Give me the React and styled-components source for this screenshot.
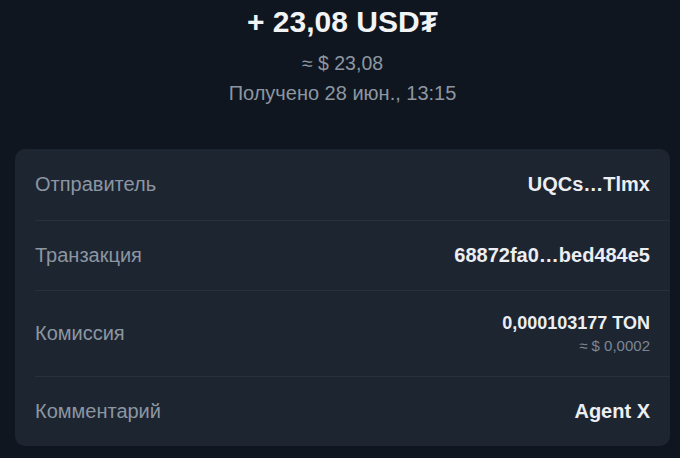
import React from "react";
import styled, { createGlobalStyle } from "styled-components";

const Global = createGlobalStyle`
  html, body { margin: 0; padding: 0; background: #10161f; }
  body { font-family: "Liberation Sans", Arial, sans-serif; }
`;

const Page = styled.div`
  width: 680px;
  height: 458px;
  background: #10161f;
  display: flex;
  flex-direction: column;
  align-items: center;
  box-sizing: border-box;
  padding: 5px 10px 0 15px;
  overflow: hidden;
`;

const Header = styled.div`
  display: flex;
  flex-direction: column;
  align-items: center;
`;

const Amount = styled.div`
  font-size: 30px;
  font-weight: 700;
  color: #f2f3f5;
  line-height: 34px;
`;

const Sub = styled.div`
  font-size: ${(p) => p.$size}px;
  color: #8c96a2;
  line-height: 24px;
  margin-top: ${(p) => p.$mt}px;
`;

const Card = styled.div`
  margin-top: 44px;
  align-self: stretch;
  background: #1d2531;
  border-radius: 10px;
  padding-left: 20px;
`;

const Row = styled.div`
  height: ${(p) => p.$h}px;
  display: flex;
  align-items: center;
  justify-content: space-between;
  padding-right: 20px;
  border-top: ${(p) => (p.$first ? "none" : "1px solid #28303c")};
  box-sizing: border-box;
`;

const Label = styled.div`
  font-size: 20px;
  color: #8c96a2;
`;

const Value = styled.div`
  font-size: 20px;
  font-weight: 700;
  color: #eceef1;
  text-align: right;
`;

const ValueStack = styled.div`
  display: flex;
  flex-direction: column;
  align-items: flex-end;
`;

const SmallValue = styled.div`
  font-size: 18px;
  font-weight: 700;
  color: #eceef1;
  line-height: 22px;
`;

const Fiat = styled.div`
  font-size: 15px;
  color: #7d8793;
  line-height: 18px;
  margin-top: 3px;
`;

export default function App() {
  return (
    <>
      <Global />
      <Page>
        <Header>
          <Amount>+ 23,08 USD₮</Amount>
          <Sub $size={19.5} $mt={12}>≈ $ 23,08</Sub>
          <Sub $size={20} $mt={6}>Получено 28 июн., 13:15</Sub>
        </Header>
        <Card>
          <Row $h={71} $first>
            <Label>Отправитель</Label>
            <Value>UQCs…Tlmx</Value>
          </Row>
          <Row $h={70}>
            <Label>Транзакция</Label>
            <Value>68872fa0…bed484e5</Value>
          </Row>
          <Row $h={86}>
            <Label>Комиссия</Label>
            <ValueStack>
              <SmallValue>0,000103177 TON</SmallValue>
              <Fiat>≈ $ 0,0002</Fiat>
            </ValueStack>
          </Row>
          <Row $h={70}>
            <Label>Комментарий</Label>
            <Value>Agent X</Value>
          </Row>
        </Card>
      </Page>
    </>
  );
}
